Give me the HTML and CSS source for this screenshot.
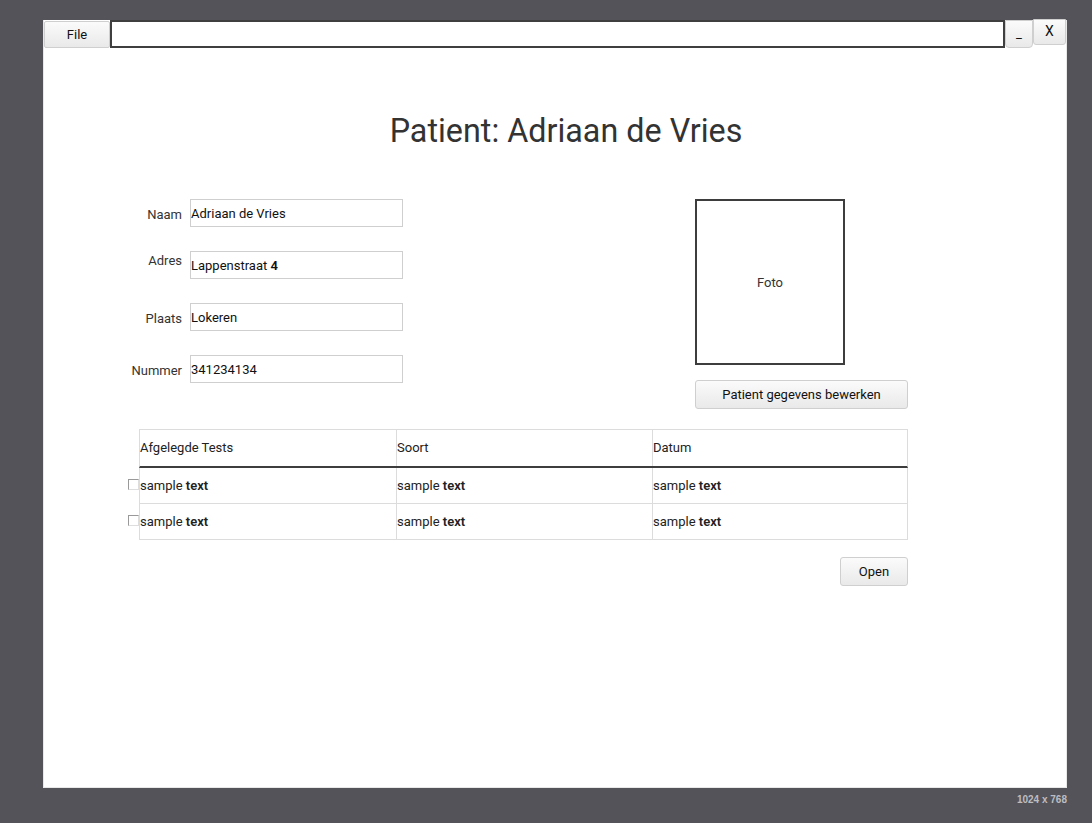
FILE: index.html
```html
<!DOCTYPE html>
<html>
<head>
<meta charset="utf-8">
<link rel="stylesheet" href="styles.css">
</head>
<body>
<div class="window">
  <div class="topbar">
    <div class="btn file-btn">File</div>
    <div class="addr"></div>
    <div class="btn min-btn">_</div>
    <div class="btn close-btn">X</div>
  </div>
  <h1 class="title">Patient: Adriaan de Vries</h1>
  <div class="content">
    <div class="top">
      <div class="form">
        <div class="label">Naam</div><div class="field"><span>Adriaan de Vries</span></div>
        <div class="label label-up">Adres</div><div class="field"><span>Lappenstraat <b>4</b></span></div>
        <div class="label">Plaats</div><div class="field"><span>Lokeren</span></div>
        <div class="label">Nummer</div><div class="field"><span>341234134</span></div>
      </div>
      <div class="photo-col">
        <div class="photo">Foto</div>
        <div class="btn edit-btn">Patient gegevens bewerken</div>
      </div>
    </div>
    <div class="table">
      <div class="trow">
        <div class="check-slot"></div>
        <div class="cells head">
          <div class="cell">Afgelegde Tests</div>
          <div class="cell">Soort</div>
          <div class="cell">Datum</div>
        </div>
      </div>
      <div class="trow">
        <div class="check-slot"><span class="check"></span></div>
        <div class="cells">
          <div class="cell"><span>sample <b>text</b></span></div>
          <div class="cell"><span>sample <b>text</b></span></div>
          <div class="cell"><span>sample <b>text</b></span></div>
        </div>
      </div>
      <div class="trow">
        <div class="check-slot"><span class="check"></span></div>
        <div class="cells">
          <div class="cell"><span>sample <b>text</b></span></div>
          <div class="cell"><span>sample <b>text</b></span></div>
          <div class="cell"><span>sample <b>text</b></span></div>
        </div>
      </div>
    </div>
    <div class="actions">
      <div class="btn open-btn">Open</div>
    </div>
  </div>
</div>
<div class="footer">1024 x 768</div>
</body>
</html>
```

FILE: styles.css
```css
html, body {
  margin: 0;
  padding: 0;
}
body {
  background: #545359;
  padding: 20px 0 0 43px;
  font-family: Roboto, "Liberation Sans", sans-serif;
  color: #222;
  font-size: 13px;
  height: 823px;
  box-sizing: border-box;
}
.window {
  width: 1024px;
  height: 768px;
  background: #fff;
  box-sizing: border-box;
  border: 1px solid #e8e8e8;
  border-top: 0;
}
.topbar {
  display: flex;
  align-items: flex-start;
  height: 27px;
}
.btn {
  background: linear-gradient(#fbfbfb, #e9e9e9);
  border: 1px solid #cfcfcf;
  border-radius: 3px;
  box-sizing: border-box;
  display: flex;
  align-items: center;
  justify-content: center;
  color: #111;
  font-size: 13px;
}
.file-btn {
  width: 66px;
  height: 27px;
  margin-top: 1px;
  border-radius: 2px;
}
.addr {
  flex: 1;
  height: 28px;
  border: 2px solid #3f3f3f;
  box-sizing: border-box;
  background: #fff;
}
.min-btn {
  width: 28px;
  height: 28px;
  align-items: flex-end;
  padding-bottom: 7px;
  line-height: 1;
  border-radius: 0 0 4px 4px;
}
.close-btn {
  width: 33px;
  height: 26px;
  margin-top: -1px;
  font-size: 14px;
  padding-bottom: 3px;
  border-radius: 0 0 3px 3px;
}
.title {
  margin: 64px 0 0;
  font-size: 32.3px;
  line-height: 40px;
  font-weight: 400;
  color: #333;
  text-align: center;
  padding-left: 22px;
}
.content {
  width: 769px;
  margin: 48px 0 0 95px;
}
.top {
  display: flex;
  justify-content: space-between;
  align-items: flex-start;
}
.form {
  display: grid;
  grid-template-columns: 43px 213px;
  column-gap: 8px;
  row-gap: 24px;
  grid-auto-rows: 28px;
}
.label {
  justify-self: end;
  align-self: center;
  white-space: nowrap;
  color: #333;
  padding-top: 2px;
}
.label-up {
  padding-top: 0;
  margin-bottom: 10px;
}
.field {
  border: 1px solid #cfcfcf;
  box-sizing: border-box;
  display: flex;
  align-items: center;
  padding-left: 0;
  color: #111;
}
.field b, .cell b {
  font-weight: 600;
}
.photo-col {
  width: 213px;
  display: flex;
  flex-direction: column;
  gap: 15px;
}
.photo {
  width: 150px;
  height: 166px;
  border: 2px solid #3d3d3d;
  box-sizing: border-box;
  display: flex;
  align-items: center;
  justify-content: center;
  color: #333;
}
.edit-btn {
  height: 29px;
  width: 213px;
}
.table {
  margin-top: 20px;
  margin-left: -12px;
}
.trow {
  display: flex;
}
.check-slot {
  width: 12px;
  display: flex;
  align-items: center;
  justify-content: flex-end;
}
.check {
  width: 11px;
  height: 11px;
  box-sizing: border-box;
  border: 1px solid #999;
  border-right-color: #ddd;
  border-bottom-color: #ddd;
  margin-top: -4px;
}
.cells {
  flex: 1;
  display: grid;
  grid-template-columns: 256px 256px 1fr;
  height: 36px;
  border-left: 1px solid #dcdcdc;
  border-right: 1px solid #dcdcdc;
  border-bottom: 1px solid #dcdcdc;
  box-sizing: border-box;
}
.cells.head {
  border-top: 1px solid #dcdcdc;
  border-bottom: 2px solid #3d3d3d;
  height: 39px;
}
.cell {
  display: flex;
  align-items: center;
  padding-left: 0;
  border-left: 1px solid #dcdcdc;
  color: #222;
  padding-bottom: 1px;
}
.cell:first-child {
  border-left: 0;
}
.actions {
  display: flex;
  justify-content: flex-end;
  margin-top: 17px;
}
.open-btn {
  width: 68px;
  height: 29px;
}
.footer {
  width: 1024px;
  text-align: right;
  color: #bdbdc2;
  font-size: 10px;
  font-weight: bold;
  font-family: "Liberation Sans", sans-serif;
  margin-top: 6px;
}
```
